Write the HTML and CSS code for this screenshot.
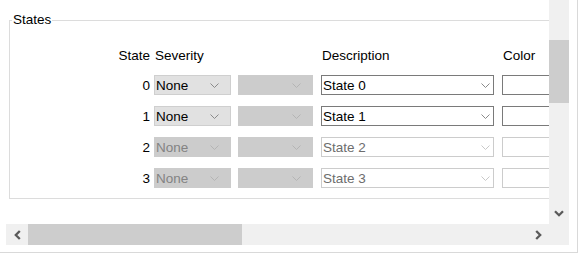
FILE: index.html
```html
<!DOCTYPE html>
<html lang="en">
  <head>
    <meta charset="UTF-8" />
    <title>States</title>
    <link rel="stylesheet" href="styles.css">
  </head>
  <body>
    <div class="window">
      <div class="scroll-grid">
        <div class="viewport">
          <fieldset class="group">
            <legend>States</legend>
            <div class="states">
              <div class="head state-col">State</div>
              <div class="head">Severity</div>
              <div class="head"></div>
              <div class="head">Description</div>
              <div class="head">Color</div>

              <div class="state-col num">0</div>
              <div><div class="combo sev">None<svg class="chev" width="9" height="5"><path d="M0.5 0.5 L4.5 4.5 L8.5 0.5"/></svg></div></div>
              <div><div class="combo sub off"><svg class="chev" width="9" height="5"><path d="M0.5 0.5 L4.5 4.5 L8.5 0.5"/></svg></div></div>
              <div><div class="combo desc">State 0<svg class="chev" width="9" height="5"><path d="M0.5 0.5 L4.5 4.5 L8.5 0.5"/></svg></div></div>
              <div><div class="color-box"></div></div>

              <div class="state-col num">1</div>
              <div><div class="combo sev">None<svg class="chev" width="9" height="5"><path d="M0.5 0.5 L4.5 4.5 L8.5 0.5"/></svg></div></div>
              <div><div class="combo sub off"><svg class="chev" width="9" height="5"><path d="M0.5 0.5 L4.5 4.5 L8.5 0.5"/></svg></div></div>
              <div><div class="combo desc">State 1<svg class="chev" width="9" height="5"><path d="M0.5 0.5 L4.5 4.5 L8.5 0.5"/></svg></div></div>
              <div><div class="color-box"></div></div>

              <div class="state-col num">2</div>
              <div><div class="combo sev off">None<svg class="chev" width="9" height="5"><path d="M0.5 0.5 L4.5 4.5 L8.5 0.5"/></svg></div></div>
              <div><div class="combo sub off"><svg class="chev" width="9" height="5"><path d="M0.5 0.5 L4.5 4.5 L8.5 0.5"/></svg></div></div>
              <div><div class="combo desc off">State 2<svg class="chev" width="9" height="5"><path d="M0.5 0.5 L4.5 4.5 L8.5 0.5"/></svg></div></div>
              <div><div class="color-box off"></div></div>

              <div class="state-col num">3</div>
              <div><div class="combo sev off">None<svg class="chev" width="9" height="5"><path d="M0.5 0.5 L4.5 4.5 L8.5 0.5"/></svg></div></div>
              <div><div class="combo sub off"><svg class="chev" width="9" height="5"><path d="M0.5 0.5 L4.5 4.5 L8.5 0.5"/></svg></div></div>
              <div><div class="combo desc off">State 3<svg class="chev" width="9" height="5"><path d="M0.5 0.5 L4.5 4.5 L8.5 0.5"/></svg></div></div>
              <div><div class="color-box off"></div></div>
            </div>
          </fieldset>
        </div>

        <div class="vscroll">
          <div class="vthumb"></div>
          <div class="vbtn">
            <svg width="10" height="7"><path d="M1 1.2 L5 5.2 L9 1.2"/></svg>
          </div>
        </div>

        <div class="hscroll">
          <div class="hbtn">
            <svg width="7" height="10"><path d="M5.8 1 L1.8 5 L5.8 9"/></svg>
          </div>
          <div class="hthumb"></div>
          <div class="hbtn right">
            <svg width="7" height="10"><path d="M1.2 1 L5.2 5 L1.2 9"/></svg>
          </div>
        </div>

        <div class="corner"></div>
      </div>
    </div>
  </body>
</html>
```

FILE: styles.css
```css
body {
  margin: 0;
  font-family: "Liberation Sans", Arial, sans-serif;
  font-size: 13.5px;
  color: #000;
  background: #fff;
}

.window {
  width: 571px;
  height: 245px;
  padding: 0 6px 7px 0;
  border-right: 1px solid #d9d9d9;
  border-bottom: 1px solid #d9d9d9;
}

.scroll-grid {
  display: grid;
  grid-template-columns: 543px 20px;
  grid-template-rows: 224px 21px;
  margin-left: 6px;
}

.viewport {
  overflow: hidden;
  padding-left: 3px;
}

.group {
  width: 600px;
  margin: 12px 0 0 0;
  padding: 16px 0 10px 0;
  border: 1px solid #dcdcdc;
  box-sizing: border-box;
  min-inline-size: 0;
}

.group legend {
  margin-left: 2px;
  padding: 0 1px;
  line-height: 16px;
}

.states {
  display: grid;
  grid-template-columns: 144px 84px 83px 181px 80px;
  grid-auto-rows: 20px;
  row-gap: 11px;
}

.head {
  align-self: end;
  line-height: 17px;
  padding-left: 1px;
}

.state-col {
  text-align: right;
  padding-right: 4px;
}

.num {
  line-height: 22px;
}

.combo {
  display: flex;
  align-items: center;
  justify-content: space-between;
  height: 20px;
  box-sizing: border-box;
  padding: 0 11px 0 1px;
  white-space: nowrap;
}

.chev path {
  fill: none;
  stroke: #8a8a8a;
  stroke-width: 1;
}

.sev {
  width: 77px;
  background-color: #e1e1e1;
  border: 1px solid #cfcfcf;
}

.sub {
  width: 75px;
  justify-content: flex-end;
}

.desc {
  width: 173px;
  background-color: #fff;
  border: 1px solid #7a7a7a;
  padding-right: 3px;
}

.combo.off {
  background-color: #cccccc;
  border: 1px solid #cccccc;
  color: #838383;
}

.combo.off .chev path {
  stroke: #b4b4b4;
}

.desc.off {
  background-color: #fff;
  border-color: #cccccc;
  color: #6d6d6d;
}

.desc.off .chev path {
  stroke: #c8c8c8;
}

.color-box {
  width: 70px;
  height: 20px;
  box-sizing: border-box;
  border: 1px solid #7a7a7a;
  background: #fff;
}

.color-box.off {
  border-color: #cccccc;
}

.vscroll {
  display: flex;
  flex-direction: column;
  background-color: #f0f0f0;
}

.vthumb {
  height: 63px;
  margin-top: 40px;
  background-color: #cdcdcd;
}

.vbtn {
  margin-top: auto;
  height: 21px;
  display: flex;
  align-items: center;
  justify-content: center;
}

.hscroll {
  display: flex;
  background-color: #f0f0f0;
}

.hbtn {
  width: 22px;
  display: flex;
  align-items: center;
  justify-content: center;
}

.hbtn.right {
  margin-left: auto;
}

.hthumb {
  width: 214px;
  background-color: #cdcdcd;
}

.vbtn path,
.hbtn path {
  fill: none;
  stroke: #5a5a5a;
  stroke-width: 2.3;
}

.corner {
  background-color: #f0f0f0;
}
```
